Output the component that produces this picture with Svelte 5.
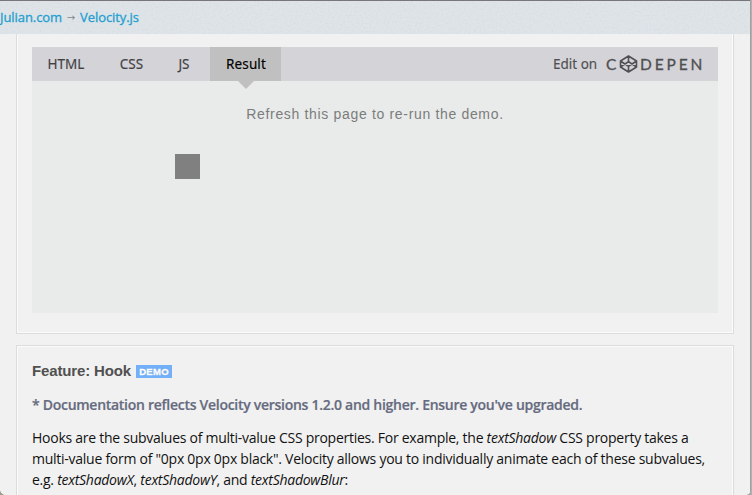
<script>
  const tabs = ['HTML', 'CSS', 'JS', 'Result'];
  let active = $state('Result');
</script>

<div class="page">
  <header>
    <svg class="grain" width="750" height="33" aria-hidden="true">
      <filter id="noise"><feTurbulence type="fractalNoise" baseFrequency=".5" numOctaves="2" /><feColorMatrix values="0 0 0 0 .55  0 0 0 0 .62  0 0 0 0 .68  1.6 0 0 0 -.65" /></filter>
      <rect width="750" height="33" filter="url(#noise)" />
    </svg>
    <nav class="crumbs"><a href="#home">Julian.com</a><span class="arrow">→</span><a href="#velocity">Velocity.js</a></nav>
  </header>

  <section class="box demo">
    <div class="pen">
      <div class="bar">
        {#each tabs as tab}
          <button class={['tab', tab.toLowerCase(), { active: active === tab }]} onclick={() => (active = tab)}>{tab}</button>
        {/each}
        <a class="edit" href="#codepen">
          <span class="on">Edit on</span>
          <span class="c">C</span>
          <svg class="logo" width="19" height="18" viewBox="0 0 19 18" fill="none" stroke="#505052" stroke-width="1.6" stroke-linejoin="round">
            <path d="M9.5 1 17.5 6v6l-8 5-8-5V6zM1.5 6l8 5.4 8-5.4M1.5 12l8-5.4 8 5.4M9.5 1v5.6M9.5 11.4V17" />
          </svg>
          <span class="rest">DEPEN</span>
        </a>
      </div>
      <div class="result">
        <p>Refresh this page to re-run the demo.</p>
        <div class="square"></div>
      </div>
    </div>
  </section>

  <section class="box feature">
    <h2><span>Feature: Hook</span><span class="badge">DEMO</span></h2>
    <p class="note">* Documentation reflects Velocity versions 1.2.0 and higher. Ensure you've upgraded.</p>
    <div class="copy">
      <div>Hooks are the subvalues of multi-value CSS properties. For example, the <i>textShadow</i> CSS property takes a</div>
      <div>multi-value form of "0px 0px 0px black". Velocity allows you to individually animate each of these subvalues,</div>
      <div>e.g. <i>textShadowX</i>, <i>textShadowY</i>, and <i>textShadowBlur</i>:</div>
    </div>
  </section>
  <div class="edge"></div>
  <div class="corner left"></div>
  <div class="corner right"></div>
</div>

<style>
  .page { position: relative; width: 752px; height: 495px; overflow: hidden; box-sizing: border-box; background: #f1f1f1; font-family: "Open Sans", sans-serif; color: #111; }
  header { position: relative; width: 750px; height: 34px; box-sizing: border-box; border-top: 1px solid #77767b; background: #dfe4e8; overflow: hidden; }
  .grain { position: absolute; inset: 0; opacity: .4; }
  .crumbs { position: relative; display: flex; align-items: center; height: 32px; font-size: 13px; white-space: nowrap; }
  a { color: #229fd0; text-decoration: none; }
  .crumbs a { -webkit-text-stroke: .3px #229fd0; letter-spacing: -.07px; }
  .arrow { width: 18px; text-align: center; color: #888; font: 10px "DejaVu Sans", sans-serif; }
  .box { width: 718px; margin-left: 16px; box-sizing: border-box; border: 1px solid #dcdcdd; box-shadow: inset 0 0 0 1px #fbfbfb; }
  .demo { height: 300px; padding: 13px 15px; border-top: 0; box-shadow: inset 1px -1px 0 #fbfbfb, inset -1px 0 0 #fbfbfb; }
  .pen { width: 686px; height: 266px; background: #e9ebea; }
  .bar { display: flex; height: 34px; background: #d4d3d8; }
  .tab { position: relative; height: 34px; padding: 0; border: 0; background: none; font: 13.5px "Noto Sans", sans-serif; color: #414144; text-align: center; -webkit-text-stroke: .15px currentColor; }
  .html { width: 68px; } .css { width: 63px; } .js { width: 47px; padding-right: 5px; }
  .result.tab { width: 71px; padding-left: 1px; }
  .active { background: #c0c0c0; color: #000; letter-spacing: .1px; }
  .active::after { content: ''; position: absolute; top: 34px; left: 50%; margin-left: -8px; border: 8px solid transparent; border-top-color: #c0c0c0; border-bottom: 0; }
  .edit { display: flex; align-items: center; margin-left: auto; width: 165px; color: #505052; white-space: nowrap; }
  .on { width: 53px; font: 13.5px "Noto Sans", sans-serif; -webkit-text-stroke: .15px currentColor; }
  .c, .rest { font: 400 15.5px/34px Lato, sans-serif; -webkit-text-stroke: .3px #505052; }
  .c { width: 13px; }
  .logo { width: 19px; margin-right: 2px; flex: none; }
  .rest { letter-spacing: 2.9px; }
  .pen > .result { padding-top: 23px; }
  .pen > .result p { margin: 0; font: 14px/20px "Liberation Sans", sans-serif; letter-spacing: .67px; text-align: center; color: #7c7c7c; }
  .square { width: 25px; height: 25px; margin: 30px 0 0 143px; background: #808080; }
  .feature { height: 170px; margin-top: 11px; padding: 15px 15px; }
  h2 { display: flex; align-items: center; height: 20px; margin: 0; color: #505050; font: bold 15px/20px "Liberation Sans", sans-serif; letter-spacing: -.14px; white-space: nowrap; }
  .badge { width: 36px; height: 13px; margin: 1px 0 0 5px; color: #fff; background: #72b0fa; font-size: 9.5px; line-height: 13px; letter-spacing: .3px; text-align: center; text-shadow: 0 0 1px #4275b0; -webkit-text-stroke: .4px #fff; }
  .note { margin: 14px 0 0; color: #666b80; font-size: 14px; font-weight: 600; line-height: 20px; letter-spacing: -.28px; white-space: nowrap; -webkit-text-stroke: .2px currentColor; }
  .copy { margin-top: 12px; font-size: 14px; line-height: 21px; letter-spacing: -.26px; white-space: nowrap; }
  .edge { position: absolute; top: 0; right: 0; width: 2px; height: 495px; background: linear-gradient(90deg, #999, #b8b8b8); }
  .corner { position: absolute; bottom: 0; width: 5px; height: 5px; }
  .left { left: 0; background: radial-gradient(circle at 100% 0, transparent 4.5px, #a39b8f 5px); }
  .right { right: 1px; background: radial-gradient(circle at 0 0, transparent 4.5px, #aaa 5px); }
</style>
